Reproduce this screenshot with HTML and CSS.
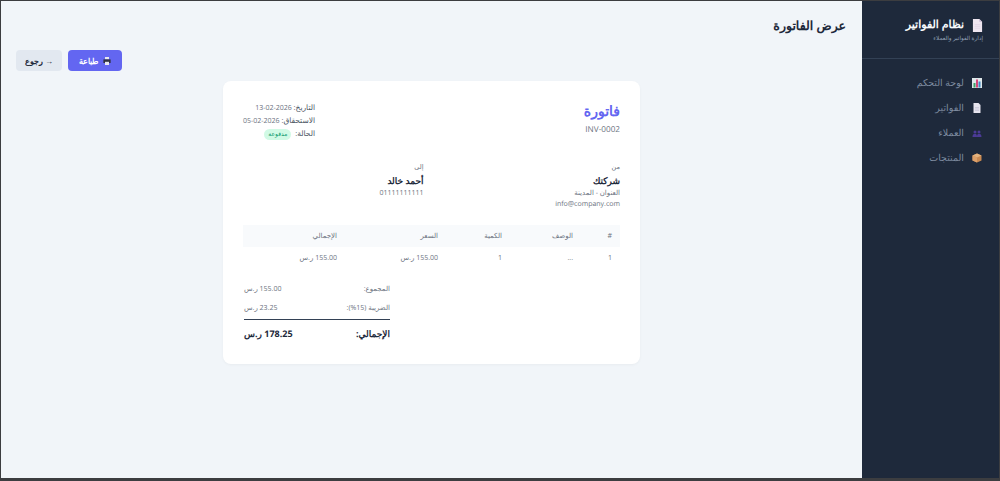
FILE: index.html
```html
<!DOCTYPE html>
<html lang="ar" dir="rtl">
<head>
<meta charset="utf-8">
<title>عرض الفاتورة</title>
<link rel="stylesheet" href="styles.css">
</head>
<body>
<div class="app">
  <aside class="sidebar">
    <div class="brand">
      <div class="brand-title">
        <svg class="brand-ico" viewBox="0 0 12 14"><path d="M1 0h7l3 3v11H1z" fill="#efe6f0"/><path d="M8 0l3 3H8z" fill="#c9b8d2"/><path d="M3 6h6M3 8h6M3 10h6" stroke="#e0cfe4" stroke-width=".7"/></svg>
        <span>نظام الفواتير</span>
      </div>
      <div class="brand-sub">إدارة الفواتير والعملاء</div>
    </div>
    <nav class="nav">
      <a class="nav-item">
        <svg class="nav-ico" viewBox="0 0 10 10"><rect width="10" height="10" fill="#dfe8ea"/><rect x="1.500" y="5" width="2" height="4.500" fill="#3fa06a"/><rect x="4" y="1.500" width="2" height="8" fill="#d6457a"/><rect x="6.500" y="3.500" width="2" height="6" fill="#3f87c4"/></svg>
        <span>لوحة التحكم</span>
      </a>
      <a class="nav-item">
        <svg class="nav-ico" viewBox="0 0 10 10"><path d="M1.500 0h5l2 2v8h-7z" fill="#e6e4ee"/><path d="M3 4.500h4M3 6h4M3 7.500h4" stroke="#b9b6cc" stroke-width=".5"/></svg>
        <span>الفواتير</span>
      </a>
      <a class="nav-item">
        <svg class="nav-ico" viewBox="0 0 10 10"><circle cx="3" cy="4" r="1.500" fill="#4b3a96"/><circle cx="7" cy="4" r="1.500" fill="#4b3a96"/><path d="M0.500 9c0-2.500 1-3 2.500-3s2 .5 2 3zM5 9c0-2.500 .5-3 2-3s2.500 .5 2.500 3z" fill="#4b3a96"/></svg>
        <span>العملاء</span>
      </a>
      <a class="nav-item">
        <svg class="nav-ico" viewBox="0 0 10 10"><path d="M5 .5l4.500 2v5L5 9.500l-4.500-2v-5z" fill="#c98a52"/><path d="M5 .5l4.500 2L5 4.500l-4.500-2z" fill="#e3b27e"/><path d="M5 4.500v5l-4.500-2v-5z" fill="#dca06a"/></svg>
        <span>المنتجات</span>
      </a>
    </nav>
  </aside>
  <main class="main">
    <h1 class="page-title">عرض الفاتورة</h1>
    <div class="actions">
      <button class="btn btn-primary">
        <svg class="btn-ico" viewBox="0 0 10 10"><rect x="2.500" y="0" width="5" height="3" fill="#e8e8ee"/><rect x="0.500" y="3" width="9" height="4.500" fill="#2f3140"/><rect x="2.500" y="6" width="5" height="4" fill="#e8e8ee"/></svg>
        <span>طباعة</span>
      </button>
      <button class="btn btn-back">→ رجوع</button>
    </div>
    <section class="card">
      <header class="inv-head">
        <div>
          <div class="inv-title">فاتورة</div>
          <div class="inv-no">INV-0002</div>
        </div>
        <div class="inv-meta">
          <div class="meta-row"><b>التاريخ:</b> <span>2026-02-13</span></div>
          <div class="meta-row"><b>الاستحقاق:</b> <span>2026-02-05</span></div>
          <div class="meta-row"><b>الحالة:</b> <span class="badge">مدفوعة</span></div>
        </div>
      </header>
      <div class="parties">
        <div class="party">
          <div class="party-label">من</div>
          <div class="party-name">شركتك</div>
          <div class="party-line">العنوان - المدينة</div>
          <div class="party-line">info@company.com</div>
        </div>
        <div class="party">
          <div class="party-label">إلى</div>
          <div class="party-name">أحمد خالد</div>
          <div class="party-line">01111111111</div>
        </div>
      </div>
      <table class="items">
        <colgroup><col class="c-n"><col class="c-d"><col class="c-q"><col class="c-p"><col class="c-t"></colgroup>
        <thead>
          <tr><th>#</th><th>الوصف</th><th>الكمية</th><th>السعر</th><th>الإجمالي</th></tr>
        </thead>
        <tbody>
          <tr><td>1</td><td>...</td><td>1</td><td>155.00 ر.س</td><td>155.00 ر.س</td></tr>
        </tbody>
      </table>
      <div class="totals">
        <div class="total-row"><span>المجموع:</span><span>155.00 ر.س</span></div>
        <div class="total-row"><span>الضريبة (15%):</span><span>23.25 ر.س</span></div>
        <div class="total-row grand"><span>الإجمالي:</span><span>178.25 ر.س</span></div>
      </div>
    </section>
  </main>
</div>
</body>
</html>
```

FILE: styles.css
```css
* { box-sizing: border-box; }
html, body { margin: 0; height: 100%; }
body {
  background: #3c3d40;
  padding: 1px 1px 3px 1px;
  font-family: "Open Sans", "Noto Sans", sans-serif;
  text-rendering: geometricPrecision;
  color: #1e293b;
  overflow: hidden;
}
.app { display: flex; height: 100%; background: #f1f5f9; }
.sidebar { width: 137px; flex: none; background: #1e293b; color: #fff; }
.brand { padding: 16px 16px 0 8px; border-bottom: 1px solid #334155; height: 58px; }
.brand-title { display: flex; align-items: center; gap: 8px; font-size: 11px; font-weight: 700; line-height: 16px; color: #f8fafc; }
.brand-ico { width: 11px; height: 13px; flex: none; }
.brand-sub { font-size: 5.700px; line-height: 10px; color: #94a3b8; margin-top: 0; }
.nav { padding: 11px 0; }
.nav-item { display: flex; align-items: center; gap: 8px; height: 25px; padding: 0 17px 0 0; font-size: 9.500px; color: #7f8ca0; }
.nav-ico { width: 10px; height: 10px; flex: none; }
.main { flex: 1; padding: 15px 16px 0 15px; min-width: 0; }
.page-title { margin: 0; font-size: 12.500px; line-height: 20px; font-weight: 600; color: #1e293b; }
.actions { display: flex; justify-content: flex-end; gap: 6px; margin-top: 14px; }
.btn { height: 21px; border: 0; border-radius: 4px; font: inherit; font-size: 8px; font-weight: 600; display: inline-flex; align-items: center; justify-content: center; gap: 5px; padding: 0; }
.btn-primary { width: 54px; background: #6366f1; color: #fff; }
.btn-back { width: 46px; background: #e2e8f0; color: #1e293b; }
.btn-ico { width: 8px; height: 8px; }
.card { width: 417px; height: 283px; margin: 10px 206px 0 0; background: #fff; border-radius: 8px; padding: 20px; box-shadow: 0 1px 3px rgba(0,0,0,.04); }
.inv-head { display: flex; justify-content: space-between; align-items: flex-start; height: 62px; }
.inv-title { font-size: 14px; line-height: 20px; font-weight: 700; color: #6366f1; margin-top: 1px; }
.inv-no { font-size: 8.200px; line-height: 12px; color: #6b7280; margin-top: 2px; }
.inv-meta { font-size: 7px; color: #6b7280; padding-top: 1px; }
.meta-row { height: 13px; line-height: 13px; }
.meta-row b { font-weight: 500; font-size: 7.500px; color: #4b5563; }
.badge { display: inline-block; background: #d1fae5; color: #059669; border-radius: 6px; font-size: 6px; line-height: 11px; padding: 0 4px; margin-right: 2px; }
.parties { display: grid; grid-template-columns: 1fr 1fr; gap: 16px; height: 62px; }
.party-label { font-size: 6.500px; line-height: 8px; color: #6b7280; }
.party-name { font-size: 9px; line-height: 14px; font-weight: 700; color: #1e293b; margin-top: 3px; }
.party-line { font-size: 7px; line-height: 10px; color: #6b7280; margin-top: 1px; }
.items { width: 100%; border-collapse: collapse; font-size: 7px; table-layout: fixed; }
.c-n { width: 39px; }
.c-d { width: 71px; }
.c-q { width: 64px; }
.c-p { width: 101px; }
.c-t { width: 102px; }
.items th { background: #f8fafc; height: 22px; font-weight: 500; color: #6b7280; text-align: right; padding: 0 8px; font-size: 7px; }
.items td { height: 22px; color: #6b7280; padding: 0 8px; text-align: right; }
.totals { width: 146px; margin: 11px 230px 0 0; font-size: 7px; color: #6b7280; }
.total-row { display: flex; justify-content: space-between; height: 19px; align-items: center; }
.grand { border-top: 1.500px solid #334155; height: 27px; margin-top: 1px; font-size: 9px; font-weight: 700; color: #1e293b; }
```
